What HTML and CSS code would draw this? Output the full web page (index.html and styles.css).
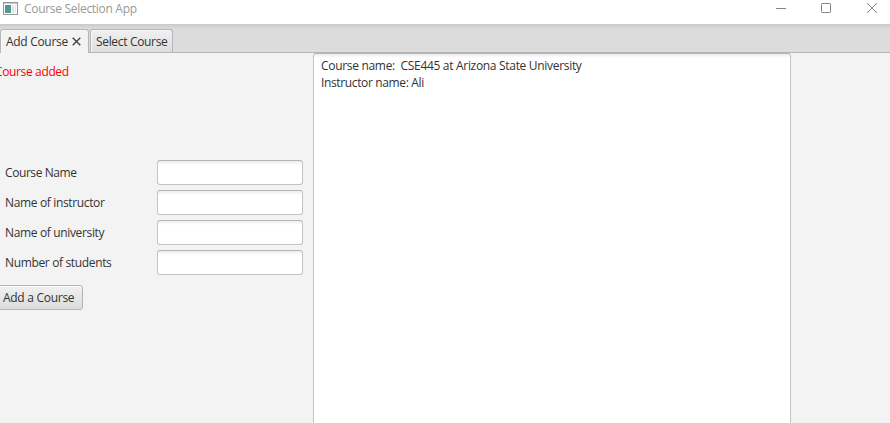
FILE: index.html
```html
<!DOCTYPE html>
<html lang="en">
<head>
<meta charset="utf-8">
<title>Course Selection App</title>
<link rel="stylesheet" href="styles.css">
</head>
<body>
<header class="titlebar">
  <svg class="app-icon" width="16" height="14" viewBox="0 0 16 14">
    <defs><linearGradient id="g" x1="0" y1="0" x2="0.300" y2="1"><stop offset="0" stop-color="#5b86b4"/><stop offset="1" stop-color="#4fa377"/></linearGradient></defs>
    <rect x=".5" y=".5" width="14" height="12" fill="#fff" stroke="#92989b"/>
    <path d="M1 1.500h13" stroke="#c6cbce"/>
    <rect x="2" y="3" width="6" height="8" fill="url(#g)"/>
    <rect x="9" y="3" width="2" height="8" fill="#d9e2e4"/>
    <rect x="12" y="3" width="1" height="8" fill="#e4e9e7"/>
  </svg>
  <h1 class="title">Course Selection App</h1>
  <svg class="controls" width="102" height="12" viewBox="0 0 102 12" fill="none" stroke="#858585">
    <path d="M0 6.500h10"/>
    <rect x="45.500" y="1.500" width="9" height="9" rx=".7"/>
    <path d="M91 1l10 10M101 1l-10 10"/>
  </svg>
</header>
<nav class="tabs">
  <div class="tab active"><span class="tab-name">Add Course</span><svg class="close" width="9" height="9" viewBox="0 0 9 9"><path d="M.7.7l7.600 7.600M8.300.7L.7 8.300" stroke="#444" stroke-width="1.400"/></svg></div>
  <div class="tab"><span class="tab-name second">Select Course</span></div>
</nav>
<main class="content">
  <form class="form">
    <p class="status">Course added</p>
    <div class="fields">
      <label class="short" for="course">Course Name</label><input id="course">
      <label for="instructor">Name of instructor</label><input id="instructor">
      <label for="university">Name of university</label><input id="university">
      <label for="students">Number of students</label><input id="students">
    </div>
    <button class="add" type="button"><span>Add a Course</span></button>
  </form>
  <section class="output">
    <p class="course-line">Course name:&nbsp; CSE445 at Arizona State University</p>
    <p class="instructor-line">Instructor name: Ali</p>
  </section>
</main>
</body>
</html>
```
FILE: styles.css
```css
* { box-sizing: border-box; }
body {
  margin: 0;
  height: 423px;
  overflow: hidden;
  display: flex;
  flex-direction: column;
  background: #f3f3f3;
  color: #333;
  font: 12px/17px "Open Sans", "Noto Sans", sans-serif;
  white-space: nowrap;
}
p, h1 { margin: 0; }
.titlebar {
  height: 24px;
  flex: none;
  display: flex;
  background: #fff;
  padding: 0 12px 0 3px;
}
.app-icon { margin-top: 2px; }
.title { font-size: 12px; font-weight: 400; color: #999; margin-left: 5px; letter-spacing: -.3px; }
.controls { margin: 2px 0 0 auto; }
.tabs {
  height: 29px;
  flex: none;
  display: flex;
  align-items: flex-start;
  gap: 1px;
  padding: 5px 0 0;
  border-bottom: 1px solid #b5b5b5;
  background: linear-gradient(#c9c9c9, #d9d9d9 4px, #dcdcdc 6px);
}
.tab {
  width: 83px;
  height: 23px;
  padding: 3px 0 0 5px;
  border: 1px solid #b5b5b5;
  border-bottom: 0;
  border-radius: 3px 3px 0 0;
  background: linear-gradient(#f0f0f0, #dedede);
  box-shadow: inset 1px 1px #f8f8f8;
}
.tab.active {
  width: 89px;
  height: 24px;
  background: #f3f3f3;
  display: flex;
}
.close { margin: 4px 7px 0 auto; }
.tab-name { letter-spacing: -.3px; }
.second { letter-spacing: -.33px; }
.content { flex: 1; display: flex; min-height: 0; }
.form { width: 313px; flex: none; padding-top: 10px; }
.status { margin-left: -5px; height: 17px; color: #f00; letter-spacing: -.36px; }
.fields {
  display: grid;
  grid-template-columns: 152px 146px;
  grid-auto-rows: 25px;
  row-gap: 5px;
  margin: 80px 0 0 5px;
  align-items: center;
}
label { letter-spacing: -.35px; }
.short { letter-spacing: -.42px; }
input, .output {
  border: 1px solid #c4c4c4;
  border-top-color: #b5b5b5;
  border-radius: 3px;
  background: linear-gradient(#ededed, #fff 4px);
}
input { width: 146px; height: 25px; padding: 0 6px; outline: 0; }
.add {
  display: block;
  width: 88px;
  height: 25px;
  margin: 10px 0 0 -5px;
  padding: 0 0 0 7px;
  border: 1px solid #b5b5b5;
  border-radius: 3px;
  background: linear-gradient(#f1f1f1, #dcdcdc);
  box-shadow: inset 0 1px #fafafa;
  color: #333;
  font: inherit;
  text-align: left;
}
.add span { letter-spacing: -.28px; }
.output { width: 478px; height: 380px; padding: 3px 7px; }
.course-line { letter-spacing: -.31px; }
.instructor-line { letter-spacing: -.36px; }
```
